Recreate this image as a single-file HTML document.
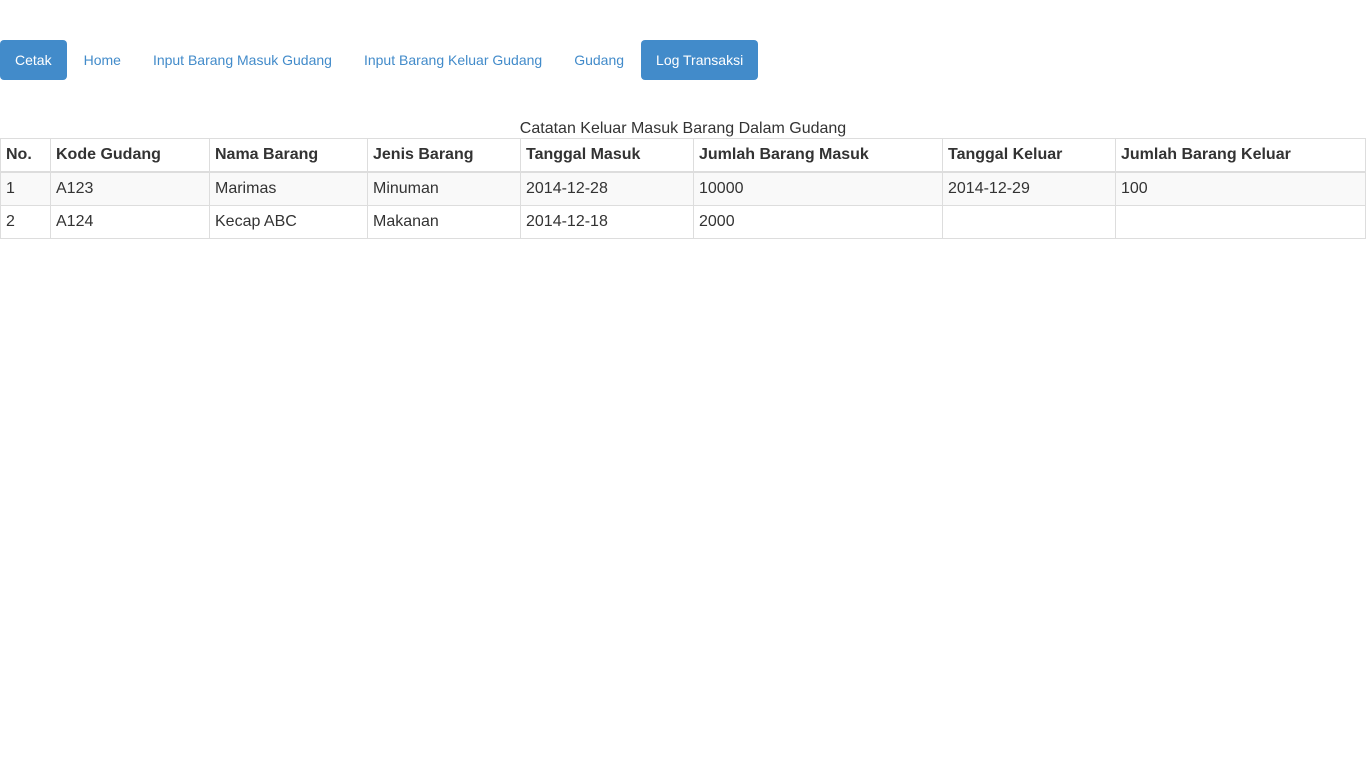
<!DOCTYPE html>
<html><head><meta charset="utf-8"><style>
body{margin:0;font-family:"Liberation Sans",Arial,sans-serif;color:#333;background:#fff}
.nav{position:absolute;top:40px;left:0;display:flex;gap:2px;font-size:14px}
.nav a{display:block;padding:0 15px;height:40px;line-height:40px;color:#428bca;text-decoration:none;border-radius:4px}
.nav a.act{background:#428bca;color:#fff}
.cap{position:absolute;top:120px;left:0;width:1366px;text-align:center;font-size:16px;line-height:18px}
table{position:absolute;top:138px;left:0;width:1366px;border-collapse:collapse;font-size:16px;table-layout:fixed}
td,th{border:1px solid #ddd;padding:0 5px;text-align:left;height:32px;white-space:nowrap}
th{font-weight:bold;border-bottom:2px solid #ddd;height:32px}
tr.s td{background:#f9f9f9}
</style></head><body>
<div class="nav"><a class="act" href="#">Cetak</a><a href="#">Home</a><a href="#">Input Barang Masuk Gudang</a><a href="#">Input Barang Keluar Gudang</a><a href="#">Gudang</a><a class="act" href="#">Log Transaksi</a></div>
<div class="cap">Catatan Keluar Masuk Barang Dalam Gudang</div>
<table>
<colgroup><col style="width:50px"><col style="width:159px"><col style="width:158px"><col style="width:153px"><col style="width:173px"><col style="width:249px"><col style="width:173px"><col></colgroup>
<tr><th>No.</th><th>Kode Gudang</th><th>Nama Barang</th><th>Jenis Barang</th><th>Tanggal Masuk</th><th>Jumlah Barang Masuk</th><th>Tanggal Keluar</th><th>Jumlah Barang Keluar</th></tr>
<tr class="s"><td>1</td><td>A123</td><td>Marimas</td><td>Minuman</td><td>2014-12-28</td><td>10000</td><td>2014-12-29</td><td>100</td></tr>
<tr><td>2</td><td>A124</td><td>Kecap ABC</td><td>Makanan</td><td>2014-12-18</td><td>2000</td><td></td><td></td></tr>
</table>
</body></html>
